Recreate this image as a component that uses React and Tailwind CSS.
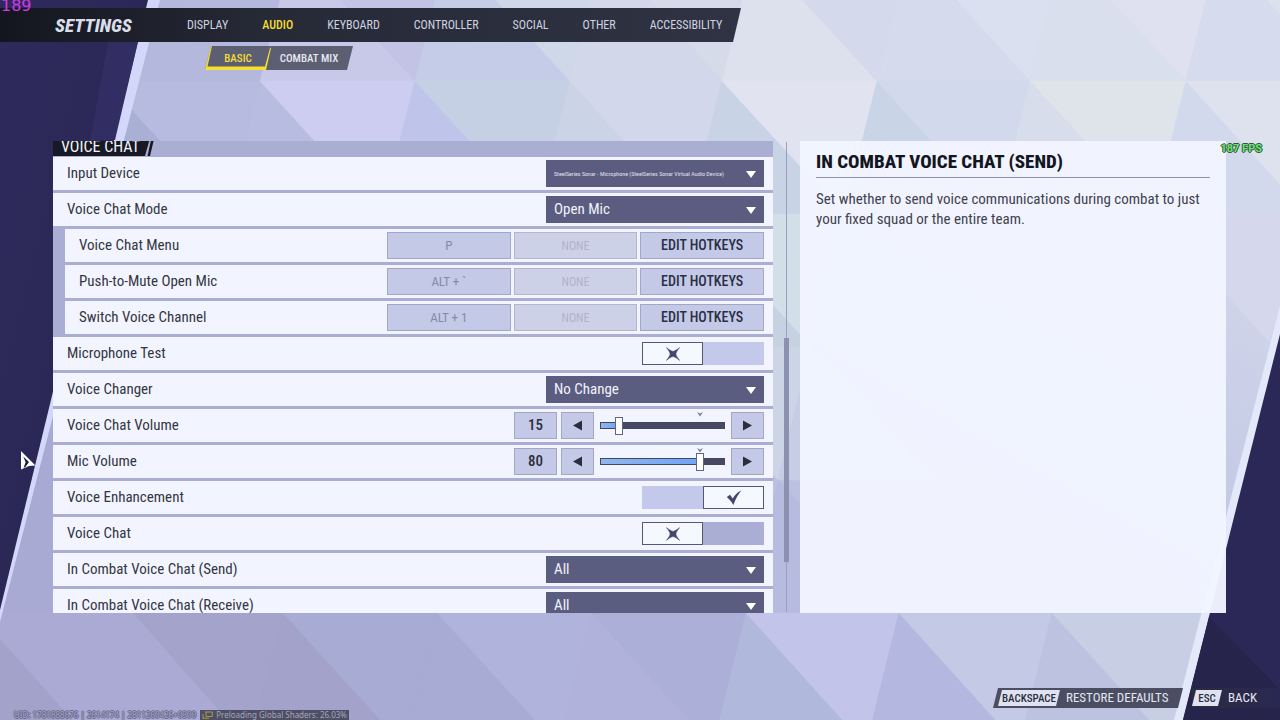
import { useState } from "react";

const FACETS = [
  // top band
  ["140,-52 293,-52 260,81", "#b5b8de"],
  ["139,-52 106,81 260,81", "#b4b8dd"],
  ["293,-52 260,81 415,81", "#c8c9e8"],
  ["293,-52 448,-52 415,81", "#c2c3e5"],
  ["448,-52 415,81 570,81", "#c5cce8"],
  ["448,-52 603,-52 570,81", "#cfd8e8"],
  ["603,-52 570,81 722,81", "#d2d8ea"],
  ["603,-52 755,-52 722,81", "#d5dbe9"],
  ["755,-52 722,81 877,81", "#dde1ee"],
  ["755,-52 910,-52 877,81", "#d4d9ec"],
  ["910,-52 877,81 1030,81", "#d5daec"],
  ["910,-52 1063,-52 1030,81", "#dae0ef"],
  ["1063,-52 1030,81 1186,81", "#dadfee"],
  ["1063,-52 1219,-52 1186,81", "#e0e1f0"],
  ["1219,-52 1186,81 1340,81", "#d6dbee"],
  // second band
  ["106,81 73,214 227,214", "#aab0d5"],
  ["106,81 260,81 227,214", "#b6bbdf"],
  ["260,81 227,214 381,214", "#b7bce0"],
  ["260,81 415,81 381,214", "#cccdf0"],
  ["415,81 381,214 536,214", "#bfc5ea"],
  ["415,81 570,81 536,214", "#c5d0e5"],
  ["570,81 536,214 689,214", "#cbd4e7"],
  ["570,81 722,81 689,214", "#d2d7eb"],
  ["722,81 689,214 844,214", "#c9d3e6"],
  ["722,81 877,81 844,214", "#e1e4f0"],
  ["877,81 844,214 997,214", "#c9d4e7"],
  ["877,81 1030,81 997,214", "#d3d9ec"],
  ["1030,81 997,214 1153,214", "#d7ddeb"],
  ["1030,81 1186,81 1153,214", "#dfe3ea"],
  ["1186,81 1153,214 1307,214", "#d3d9ed"],
  ["1186,81 1340,81 1307,214", "#dde2ee"],
  // lower middle bands
  ["689,214 844,214 811,347", "#d3dfe8"],
  ["689,214 656,347 811,347", "#c6d1e2"],
  ["811,347 778,480 656,347", "#ccd5e6"],
  ["811,347 778,480 932,480", "#c6cde4"],
  ["1153,214 1307,214 1274,347", "#d5d8ec"],
  ["746,613 778,480 899,613", "#b7bbdf"],
  ["778,480 656,480 746,613", "#bcc0e3"],
  // bottom band
  ["-23,613 -56,746 96,746", "#a2a2cb"],
  ["-23,613 133,613 96,746", "#aaaad4"],
  ["133,613 283,613 250,746", "#a4a3cc"],
  ["133,613 96,746 250,746", "#aaaad4"],
  ["283,613 250,746 404,746", "#a3a2cb"],
  ["283,613 437,613 404,746", "#a8abd4"],
  ["437,613 404,746 559,746", "#a8abd3"],
  ["437,613 592,613 559,746", "#b0b3dc"],
  ["592,613 559,746 713,746", "#b0b2dc"],
  ["592,613 746,613 713,746", "#acafd7"],
  ["746,613 713,746 866,746", "#b0b8dc"],
  ["746,613 899,613 866,746", "#c2c4e9"],
  ["899,613 866,746 1019,746", "#b4b7df"],
  ["899,613 1052,613 1019,746", "#c4c9e5"],
  ["1052,613 1019,746 1173,746", "#bec2e1"],
  ["1052,613 1206,613 1173,746", "#c8cee4"],
];

function Backdrop() {
  return (
    <svg className="absolute inset-0 h-full w-full" viewBox="0 0 1280 720" preserveAspectRatio="none" aria-hidden="true">
      <defs>
        <linearGradient id="sky" x1="0" y1="1" x2="1" y2="0">
          <stop offset="0" stopColor="#a9a9d3" />
          <stop offset="0.5" stopColor="#bcc2e2" />
          <stop offset="1" stopColor="#dde2ef" />
        </linearGradient>
        <linearGradient id="night" x1="0" y1="0" x2="1" y2="1">
          <stop offset="0" stopColor="#2e2a5c" />
          <stop offset="1" stopColor="#28244f" />
        </linearGradient>
      </defs>
      <rect width="1280" height="720" fill="url(#sky)" />
      {FACETS.map(([points, fill]) => (
        <polygon key={points} points={points} fill={fill} stroke={fill} strokeWidth="0.5" />
      ))}
      <polygon points="53,300 53,613 0,613" fill="#a9aad3" />
      <polygon points="0,0 160,0 0,622" fill="#d3d8fb" />
      <polygon points="0,0 148,0 0,610" fill="url(#night)" />
      <polygon points="108,42 138,42 115,140 90,140" fill="#322e63" />
      <polygon points="1280,306 1280,720 1174,720" fill="#e3e9fb" />
      <polygon points="1280,334 1280,720 1183,720" fill="#2b2857" />
      <polygon points="1209,617 1280,690 1280,720 1183,720" fill="#27244c" />
    </svg>
  );
}

const TABS = ["DISPLAY", "AUDIO", "KEYBOARD", "CONTROLLER", "SOCIAL", "OTHER", "ACCESSIBILITY"];

function Header() {
  return (
    <header className="pt-2">
      <div className="flex h-[34px] w-[741px] max-w-full items-center bg-linear-to-r from-[#14161f] via-[#262936] via-35% to-[#2f3343] pl-[55px] [clip-path:polygon(0_0,100%_0,calc(100%-8px)_100%,0_100%)]">
        <h1 className="w-[132px] text-[19px] leading-none font-extrabold text-[#dadeea] italic">SETTINGS</h1>
        <nav className="flex gap-[34px] text-[12px] leading-none">
          {TABS.map((tab) => (
            <a key={tab} href="#settings" className={tab === "AUDIO" ? "font-medium text-[#f4dd35]" : "text-[#d0d3e0]"}>
              {tab}
            </a>
          ))}
        </nav>
      </div>
      <nav className="mt-1 ml-[205px] flex h-6 text-[11px] leading-none font-medium">
        <a href="#basic" className="relative z-10 flex w-[66px] items-center justify-center text-[#f4dd35]">
          <svg className="absolute inset-0 h-full w-full" viewBox="0 0 66 24" aria-hidden="true">
            <polygon points="6,0 66,0 60,24 0,24" fill="#5c5e72" />
            <polygon points="6,0 7,0 2.5,20.5 60,20.5 65,2 66,2 61,24 0,24" fill="#f6df2e" />
          </svg>
          <span className="relative">BASIC</span>
        </a>
        <a href="#combat-mix" className="-ml-[6px] flex w-[88px] items-center justify-center bg-[#5c5e72] text-[#e6e7f2] [clip-path:polygon(6px_0,100%_0,calc(100%-6px)_100%,0_100%)]">
          COMBAT MIX
        </a>
      </nav>
    </header>
  );
}

function Row({ label, id, nested, children }) {
  return (
    <div className={nested ? "pl-3" : ""}>
      <div className="flex h-[33px] items-center justify-between bg-[#f2f5ff] pr-[9px] pl-[14px]">
        <label htmlFor={id} className="text-[15px] text-[#34363f]">{label}</label>
        {children}
      </div>
    </div>
  );
}

function Dropdown({ id, value, small }) {
  return (
    <div className="relative h-[27px] w-[218px]">
      <select id={id} defaultValue={value} className={`block h-full w-full appearance-none bg-[#5b5d80] pr-8 pl-2 ${small ? "text-[6px] text-[#e0e1ee]" : "text-[15px] text-[#f1f2fb]"}`}>
        <option>{value}</option>
      </select>
      <svg className="pointer-events-none absolute top-[11px] right-2 h-[7px] w-[10px]" viewBox="0 0 10 7" aria-hidden="true">
        <polygon points="0,0 10,0 5,7" fill="#fff" />
      </svg>
    </div>
  );
}

function Hotkeys({ id, bind }) {
  return (
    <div className="grid h-[27px] w-[377px] grid-cols-3 gap-[3px]">
      <button id={id} className="border border-[#a3a8c2] bg-[#c3c9e6] text-[13px] text-[#858aa8]">{bind}</button>
      <button className="border border-[#b3b7cd] bg-[#cdd1e7] text-[12px] text-[#b0b3ca]">NONE</button>
      <button className="border border-[#a3a8c2] bg-[#c3c9e6] text-[14px] font-medium text-[#2b2e45]">EDIT HOTKEYS</button>
    </div>
  );
}

function Toggle({ id, initial, muted }) {
  const [on, setOn] = useState(initial);
  return (
    <button id={id} role="switch" aria-checked={on} onClick={() => setOn(!on)} className={`flex h-[23px] w-[122px] ${on ? "justify-end" : ""} ${muted ? "bg-[#aaaed5]" : "bg-[#c4c8ea]"}`}>
      <span className="flex h-full w-[61px] items-center justify-center border border-[#55586f] bg-[#f6f8ff]">
        {on ? (
          <svg className="h-4 w-4" viewBox="0 0 16 16" aria-hidden="true">
            <path d="M0.8 7 4 4.8 6.8 8.6C8.6 5.2 11.2 2.4 15.2 0.6 12 4.8 9.6 9.2 7.4 15 5.4 11.6 3.2 9.2 0.8 7Z" fill="#444868" />
          </svg>
        ) : (
          <svg className="h-[14px] w-[14px]" viewBox="0 0 14 14" aria-hidden="true">
            <path d="M0.4 0.6C3 2.6 5 4 7 4.4 9 4 11 2.6 13.6 0.6 11.6 3.2 10.2 5.2 9.9 7 10.2 8.8 11.6 10.8 13.6 13.4 11 11.4 9 10 7 9.6 5 10 3 11.4 0.4 13.4 2.4 10.8 3.8 8.8 4.1 7 3.8 5.2 2.4 3.2 0.4 0.6Z" fill="#444868" stroke="#444868" strokeWidth="0.5" />
          </svg>
        )}
      </span>
    </button>
  );
}

function Stepper({ label, direction, onClick }) {
  return (
    <button aria-label={label} onClick={onClick} className="flex h-full w-[33px] items-center justify-center border border-[#a3a8c2] bg-[#c3c9e6]">
      <svg className="h-[11px] w-[9px]" viewBox="0 0 9 11" aria-hidden="true">
        <polygon points={direction === "left" ? "9,0.5 9,10.5 0,5.5" : "0,0.5 0,10.5 9,5.5"} fill="#2b2e3c" />
      </svg>
    </button>
  );
}

function Volume({ id, initial, name }) {
  const [value, setValue] = useState(initial);
  return (
    <div className="flex h-[27px] items-center">
      <output htmlFor={id} className="mr-1 flex h-full w-[43px] items-center justify-center border border-[#a3a8c2] bg-[#c3c9e6] text-[15px] font-medium text-[#2b2e3c]">{value}</output>
      <Stepper label={`Lower ${name}`} direction="left" onClick={() => setValue(Math.max(0, value - 1))} />
      <div className="relative mx-[6px] flex h-full w-[125px] items-center">
        <div className="h-[7px] w-full border border-[#45475f] bg-[#474963]">
          <div className="h-full bg-linear-to-r from-[#8fb6ee] to-[#6ea4f7]" style={{ width: `${value}%` }} />
        </div>
        <svg className="absolute top-0 left-[97px] h-[5px] w-[6px]" viewBox="0 0 6 5" aria-hidden="true">
          <path d="M0 0 3 1.5 6 0 3 4.5Z" fill="#7b7e93" />
        </svg>
        <input
          id={id}
          type="range"
          min="0"
          max="100"
          value={value}
          onChange={(event) => setValue(Number(event.target.value))}
          className="absolute inset-y-0 -left-1 w-[133px] appearance-none bg-transparent [&::-webkit-slider-thumb]:h-[18px] [&::-webkit-slider-thumb]:w-2 [&::-webkit-slider-thumb]:appearance-none [&::-webkit-slider-thumb]:border [&::-webkit-slider-thumb]:border-solid [&::-webkit-slider-thumb]:border-[#62657c] [&::-webkit-slider-thumb]:bg-white"
        />
      </div>
      <Stepper label={`Raise ${name}`} direction="right" onClick={() => setValue(Math.min(100, value + 1))} />
    </div>
  );
}

function SettingsList() {
  return (
    <section className="overflow-hidden bg-[#aaaed2]">
      <div className="-mt-[10px] flex h-[25px] items-end">
        <h2 className="h-full w-[99px] bg-[#171925] pl-2 text-[16px] leading-[31px] text-[#f2f3fb] [clip-path:polygon(0_0,100%_0,calc(100%-7px)_100%,0_100%)]">VOICE CHAT</h2>
        <svg className="-ml-[5px] h-full w-[9px]" viewBox="0 0 9 25" aria-hidden="true">
          <polygon points="6,0 9,0 3,25 0.5,25" fill="#171925" />
        </svg>
      </div>
      <div className="mt-px flex flex-col gap-[3px]">
        <Row label="Input Device" id="input-device">
          <Dropdown id="input-device" value="SteelSeries Sonar - Microphone (SteelSeries Sonar Virtual Audio Device)" small />
        </Row>
        <Row label="Voice Chat Mode" id="chat-mode"><Dropdown id="chat-mode" value="Open Mic" /></Row>
        <Row label="Voice Chat Menu" id="chat-menu" nested><Hotkeys id="chat-menu" bind="P" /></Row>
        <Row label="Push-to-Mute Open Mic" id="push-mute" nested><Hotkeys id="push-mute" bind="ALT + `" /></Row>
        <Row label="Switch Voice Channel" id="switch-channel" nested><Hotkeys id="switch-channel" bind="ALT + 1" /></Row>
        <Row label="Microphone Test" id="mic-test"><Toggle id="mic-test" initial={false} /></Row>
        <Row label="Voice Changer" id="changer"><Dropdown id="changer" value="No Change" /></Row>
        <Row label="Voice Chat Volume" id="chat-volume"><Volume id="chat-volume" initial={15} name="voice chat volume" /></Row>
        <Row label="Mic Volume" id="mic-volume"><Volume id="mic-volume" initial={80} name="mic volume" /></Row>
        <Row label="Voice Enhancement" id="enhancement"><Toggle id="enhancement" initial /></Row>
        <Row label="Voice Chat" id="voice-chat"><Toggle id="voice-chat" initial={false} muted /></Row>
        <Row label="In Combat Voice Chat (Send)" id="combat-send"><Dropdown id="combat-send" value="All" /></Row>
        <Row label="In Combat Voice Chat (Receive)" id="combat-receive"><Dropdown id="combat-receive" value="All" /></Row>
      </div>
    </section>
  );
}

function Key({ children, className }) {
  return (
    <kbd className={`flex h-4 shrink-0 items-center justify-center bg-[#dfe2f1] font-[inherit] text-[11px] leading-none font-medium text-[#2c2e3e] [clip-path:polygon(4px_0,100%_0,calc(100%-4px)_100%,0_100%)] ${className}`}>
      {children}
    </kbd>
  );
}

export default function App() {
  return (
    <div className="relative flex h-screen flex-col overflow-hidden bg-[#bcc2e2] [font-family:'Roboto_Condensed',Roboto,'Liberation_Sans',sans-serif]">
      <Backdrop />
      <div className="relative flex min-h-0 flex-1 flex-col">
        <Header />
        <main className="mt-[71px] grid min-h-0 flex-1 grid-cols-[minmax(0,720fr)_27px_minmax(0,426fr)] grid-rows-[minmax(0,1fr)] pr-[54px] pl-[53px]">
          <SettingsList />
          <div className="flex justify-center py-px" aria-hidden="true">
            <div className="flex w-[5px] flex-col items-center">
              <div className="w-px flex-[196] bg-[#9a9fbe]" />
              <div className="w-[5px] flex-[223] bg-[#8d91b0]" />
              <div className="w-px flex-[50] bg-[#9a9fbe]" />
            </div>
          </div>
          <aside className="bg-[#f2f5ff]/97 px-4">
            <h2 className="mt-[5px] border-b border-[#8e91a8] text-[19px] leading-[31px] font-extrabold text-[#14161f]">IN COMBAT VOICE CHAT (SEND)</h2>
            <p className="mt-[11px] text-[15px] leading-5 text-[#3f424d]">
              Set whether to send voice communications during combat to just your fixed squad or the entire team.
            </p>
          </aside>
        </main>
        <footer className="mt-[75px] mb-3 flex h-5 justify-end">
          <button className="flex w-[190px] items-center bg-[#4b4e62] pl-[5px] text-[13px] text-[#e3e5f1] [clip-path:polygon(5px_0,100%_0,calc(100%-5px)_100%,0_100%)]">
            <Key className="w-[62px]">BACKSPACE</Key>
            <span className="ml-[6px]">RESTORE DEFAULTS</span>
          </button>
          <button className="ml-[9px] flex w-[88px] items-center bg-linear-to-r from-[#2b2b40] to-[#2a2852] text-[13px] text-[#e3e5f1]">
            <Key className="w-[30px]">ESC</Key>
            <span className="ml-[6px]">BACK</span>
          </button>
        </footer>
      </div>
      <svg className="absolute top-[450px] left-[20px] h-5 w-4" viewBox="0 0 16 20" aria-hidden="true">
        <path d="M1 1 15.5 15.5 9 16 1 19.5Z" fill="#fff" />
        <path d="M3.2 6.6 9 12 5.4 17 3.6 17.8 5.6 12.2Z" fill="#1c1b38" />
      </svg>
      <div className="absolute top-0 left-px [font-family:'DejaVu_Sans',sans-serif] text-[16px] leading-[12px] text-[#d13ae6]">189</div>
      <div className="absolute top-[142px] right-[18px] font-[Roboto] text-[11px] leading-[14px] font-bold text-[#6fe07a] [text-shadow:1px_0_#2c5a34,-1px_0_#2c5a34,0_1px_#2c5a34,0_-1px_#2c5a34]">187 FPS</div>
      <div className="absolute bottom-0 left-[14px] flex items-center gap-1 text-[8px] leading-[10px] [font-family:'Noto_Sans',sans-serif]">
        <span className="text-[#a4a4c2] [text-shadow:1px_0_#66668a,-1px_0_#66668a,0_1px_#66668a,0_-1px_#66668a]">UID: 1781888676 | 2614174 | 2811260426+0300</span>
        <span className="flex items-center gap-[3px] bg-[#4e4e66] px-[2px] text-[#a6a6b8]">
          <svg className="h-2 w-[11px]" viewBox="0 0 11 8" fill="none" stroke="#a89c3c" aria-hidden="true">
            <path d="M3 1H10.3V5.5H4V1M1 3V7.3H7" />
          </svg>
          Preloading Global Shaders: 26.03%
        </span>
      </div>
    </div>
  );
}
